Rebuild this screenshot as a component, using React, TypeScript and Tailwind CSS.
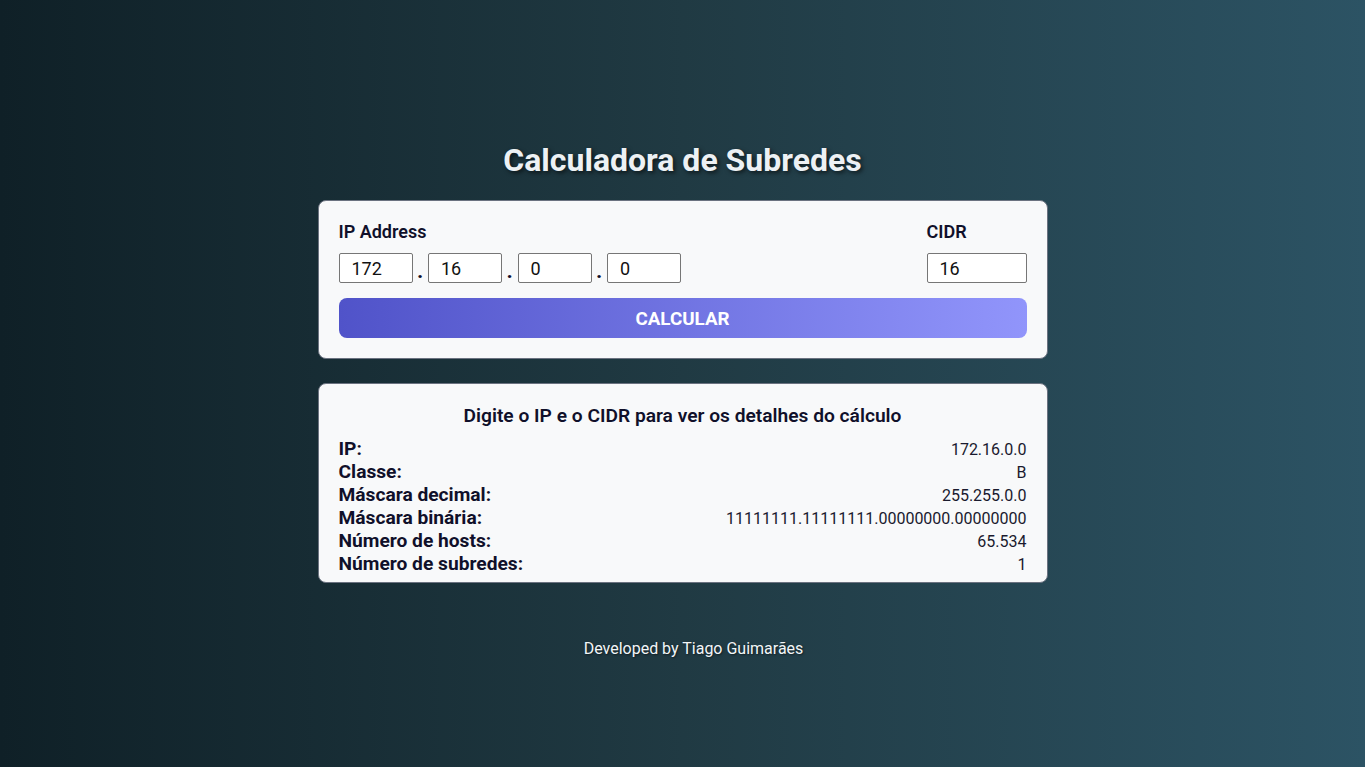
import React from "react";

const rows: [string, string][] = [
  ["IP:", "172.16.0.0"],
  ["Classe:", "B"],
  ["Máscara decimal:", "255.255.0.0"],
  ["Máscara binária:", "11111111.11111111.00000000.00000000"],
  ["Número de hosts:", "65.534"],
  ["Número de subredes:", "1"],
];

function Octet({ v }: { v: string }) {
  return (
    <input
      defaultValue={v}
      className="w-[74px] h-[30px] border border-[#767676] rounded-[2px] bg-white pl-[12px] text-[18px] text-[#111] outline-none"
    />
  );
}

function Dot() {
  return <span className="w-[15.5px] text-center text-[19px] font-black text-[#10102a] leading-none pt-[6px]">.</span>;
}

export default function App() {
  return (
    <div
      className="min-h-[767px] w-full bg-[linear-gradient(to_right,#0f2027,#203a43,#2c5364)] flex flex-col items-center pt-[141px]"
      style={{ fontFamily: "Roboto, 'Liberation Sans', sans-serif" }}
    >
      <h1 className="text-[32px] font-bold leading-[38px] text-[#edf1f4] [text-shadow:2px_2px_4px_rgba(0,0,0,0.6)]">
        Calculadora de Subredes
      </h1>

      <div className="mt-[21px] w-[730px] bg-[#f8f9fa] border border-[#6b7280] rounded-lg p-5">
        <div className="flex justify-between">
          <div className="flex flex-col">
            <label className="text-[18px] font-semibold leading-[21px] text-[#10102a] mb-[11px]">IP Address</label>
            <div className="flex items-center">
              <Octet v="172" />
              <Dot />
              <Octet v="16" />
              <Dot />
              <Octet v="0" />
              <Dot />
              <Octet v="0" />
            </div>
          </div>
          <div className="flex flex-col">
            <label className="text-[18px] font-semibold leading-[21px] text-[#10102a] mb-[11px]">CIDR</label>
            <input
              defaultValue="16"
              className="w-[100px] h-[30px] border border-[#767676] rounded-[2px] bg-white pl-[12px] text-[18px] text-[#111] outline-none"
            />
          </div>
        </div>
        <button className="mt-[15px] w-full h-[40px] rounded-lg bg-[linear-gradient(to_right,#5053c9,#9195fb)] text-white text-[18.8px] font-bold pt-[2px]">
          CALCULAR
        </button>
      </div>

      <div className="mt-[24px] w-[730px] bg-[#f8f9fa] border border-[#6b7280] rounded-lg px-5 pt-[21px] pb-[7px]">
        <h2 className="text-center text-[19.2px] font-semibold leading-[22px] text-[#10102a] mb-[10px]">
          Digite o IP e o CIDR para ver os detalhes do cálculo
        </h2>
        {rows.map(([l, v]) => (
          <div key={l} className="flex justify-between items-baseline h-[23px]">
            <span className="text-[19.2px] font-bold leading-[23px] text-[#10102a]">{l}</span>
            <span className="text-[16px] leading-[23px] text-[#1a1a2e]">{v}</span>
          </div>
        ))}
      </div>

      <p className="mt-[56px] pl-[22px] text-[16px] leading-[19px] text-[#f2f6f8] [text-shadow:1px_1px_2px_rgba(0,0,0,0.5)]">
        Developed by Tiago Guimarães
      </p>
    </div>
  );
}
